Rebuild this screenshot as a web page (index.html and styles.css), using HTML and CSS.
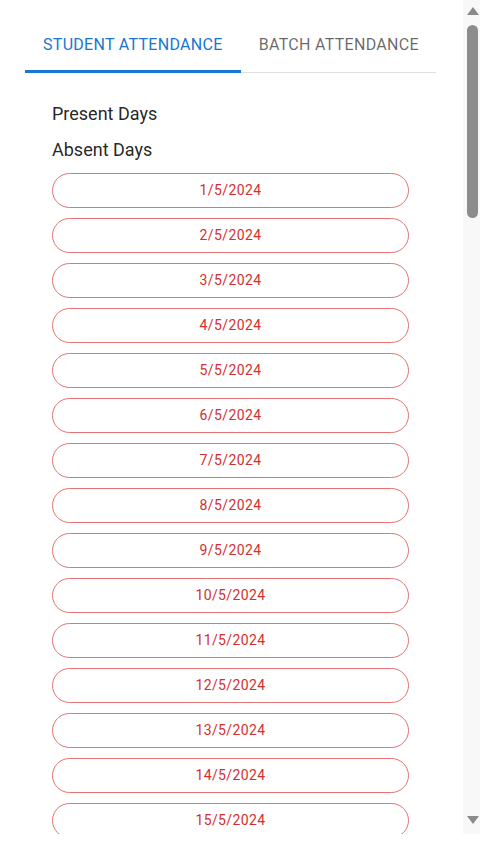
FILE: index.html
```html
<!DOCTYPE html>
<html lang="en">
<head>
<meta charset="utf-8">
<title>Attendance</title>
<link rel="stylesheet" href="styles.css">
</head>
<body>
<div class="frame">
  <div class="scroller">
    <div class="tabs">
      <button class="tab active">Student Attendance</button>
      <button class="tab">Batch Attendance</button>
    </div>
    <div class="panel">
      <div class="label">Present Days</div>
      <div class="label">Absent Days</div>
      <div class="days">
        <button class="day">1/5/2024</button>
        <button class="day">2/5/2024</button>
        <button class="day">3/5/2024</button>
        <button class="day">4/5/2024</button>
        <button class="day">5/5/2024</button>
        <button class="day">6/5/2024</button>
        <button class="day">7/5/2024</button>
        <button class="day">8/5/2024</button>
        <button class="day">9/5/2024</button>
        <button class="day">10/5/2024</button>
        <button class="day">11/5/2024</button>
        <button class="day">12/5/2024</button>
        <button class="day">13/5/2024</button>
        <button class="day">14/5/2024</button>
        <button class="day">15/5/2024</button>
      </div>
    </div>
  </div>
  <div class="scrollbar" aria-hidden="true">
    <span class="arrow up"></span>
    <span class="thumb"></span>
    <span class="arrow down"></span>
  </div>
</div>
</body>
</html>
```

FILE: styles.css
```css
html, body {
  margin: 0;
  padding: 0;
  background: #ffffff;
}

body {
  font-family: Roboto, "Liberation Sans", Arial, sans-serif;
  color: rgba(0, 0, 0, 0.87);
}

.frame {
  position: relative;
  width: 480px;
  height: 834px;
}

.scroller {
  width: 463px;
  height: 834px;
  overflow: hidden;
  box-sizing: border-box;
  padding: 21px 27px 0 25px;
}

.tabs {
  display: flex;
  align-items: flex-start;
  height: 52px;
  box-sizing: border-box;
  border-bottom: 1px solid #e0e0e0;
}

.tab {
  flex: none;
  white-space: nowrap;
  font-family: inherit;
  font-size: 16px;
  font-weight: 400;
  line-height: 24px;
  letter-spacing: 0.3px;
  text-transform: uppercase;
  color: rgba(0, 0, 0, 0.6);
  background: none;
  border: 0;
  margin: 0;
  padding: 0 18px 3px;
  height: 51px;
  box-sizing: border-box;
  cursor: pointer;
}

.tab.active {
  color: #1976d2;
  border-bottom: 3px solid #1976d2;
  padding-bottom: 1px;
  height: 52px;
}

.panel {
  padding: 29px 27px 28px 27px;
}

.label {
  font-size: 18px;
  line-height: 24px;
  margin-bottom: 12px;
}

.label + .label {
  margin-bottom: 11px;
}

.days {
  display: flex;
  flex-direction: column;
  gap: 10px;
}

.day {
  height: 35px;
  width: 100%;
  flex: none;
  box-sizing: border-box;
  border: 1px solid #e57373;
  border-radius: 18px;
  background: #ffffff;
  color: #d32f2f;
  font-family: inherit;
  font-size: 14px;
  font-weight: 400;
  letter-spacing: 0.4px;
  padding: 0 0 1px;
  cursor: pointer;
}

.scrollbar {
  position: absolute;
  top: 0;
  right: 0;
  width: 17px;
  height: 834px;
  background: #f8f8f8;
}

.arrow {
  position: absolute;
  left: 4px;
  width: 0;
  height: 0;
  border-left: 6px solid transparent;
  border-right: 6px solid transparent;
}

.arrow.up {
  top: 7px;
  border-bottom: 8px solid #8a8a8a;
}

.arrow.down {
  bottom: 10px;
  border-top: 8px solid #8a8a8a;
}

.thumb {
  position: absolute;
  left: 4px;
  top: 25px;
  width: 11px;
  height: 193px;
  border-radius: 6px;
  background: #8c8c8c;
}
```
